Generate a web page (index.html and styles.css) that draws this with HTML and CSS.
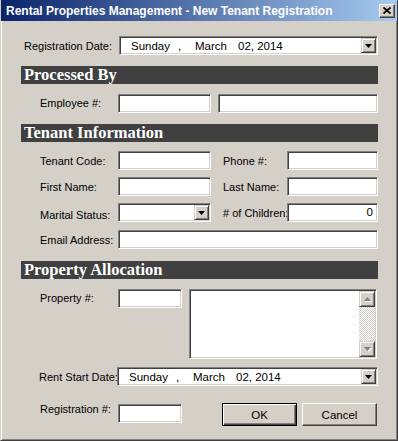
FILE: index.html
```html
<!DOCTYPE html>
<html>
<head>
<meta charset="utf-8">
<title>New Tenant Registration</title>
<link rel="stylesheet" href="styles.css">
</head>
<body>
<div class="window">
  <div class="titlebar">
    <span class="title">Rental Properties Management - New Tenant Registration</span>
    <span class="close-btn"><svg width="8" height="7" viewBox="0 0 8 7"><path d="M0.5 0.5L7.5 6.5M7.5 0.5L0.5 6.5" stroke="#000" stroke-width="1.7"/></svg></span>
  </div>
  <div class="form">
    <div class="row row-regdate">
      <span class="lbl lbl-date">Registration Date:</span>
      <div class="field datefield w-date">
        <span class="d-day">Sunday</span><span class="d-comma">,</span><span class="d-month">March</span><span class="d-rest">02, 2014</span>
        <span class="dropbtn"><svg width="7" height="4" viewBox="0 0 7 4"><path d="M0 0h7L3.5 4z" fill="#000"/></svg></span>
      </div>
    </div>

    <div class="bar bar-1">Processed By</div>

    <div class="row row-emp">
      <span class="lbl lbl-main">Employee #:</span>
      <div class="field w-93"></div>
      <div class="field w-160 gap-7"></div>
    </div>

    <div class="bar bar-2">Tenant Information</div>

    <div class="row row-tcode">
      <span class="lbl lbl-main">Tenant Code:</span>
      <div class="field w-93"></div>
      <span class="lbl lbl-right">Phone #:</span>
      <div class="field w-91"></div>
    </div>

    <div class="row row-next">
      <span class="lbl lbl-main">First Name:</span>
      <div class="field w-93"></div>
      <span class="lbl lbl-right">Last Name:</span>
      <div class="field w-91"></div>
    </div>

    <div class="row row-next">
      <span class="lbl lbl-main lbl-low">Marital Status:</span>
      <div class="field combo w-93">
        <span class="dropbtn"><svg width="7" height="4" viewBox="0 0 7 4"><path d="M0 0h7L3.5 4z" fill="#000"/></svg></span>
      </div>
      <span class="lbl lbl-right">#&nbsp;of Children:</span>
      <div class="field w-91 numfield">0</div>
    </div>

    <div class="row row-email">
      <span class="lbl lbl-main">Email Address:</span>
      <div class="field w-260"></div>
    </div>

    <div class="bar bar-3">Property Allocation</div>

    <div class="row row-prop">
      <span class="lbl lbl-main lbl-prop">Property #:</span>
      <div class="field w-64"></div>
      <div class="field listbox gap-7">
        <div class="scrollbar">
          <span class="sbtn"><svg width="7" height="4" viewBox="0 0 7 4"><path d="M3.5 0L7 4H0z" fill="#808080"/></svg></span>
          <span class="track"></span>
          <span class="sbtn"><svg width="7" height="4" viewBox="0 0 7 4"><path d="M0 0h7L3.5 4z" fill="#808080"/></svg></span>
        </div>
      </div>
    </div>

    <div class="row row-rent">
      <span class="lbl lbl-rent">Rent Start Date:</span>
      <div class="field datefield w-rent">
        <span class="d-day">Sunday</span><span class="d-comma">,</span><span class="d-month">March</span><span class="d-rest">02, 2014</span>
        <span class="dropbtn"><svg width="7" height="4" viewBox="0 0 7 4"><path d="M0 0h7L3.5 4z" fill="#000"/></svg></span>
      </div>
    </div>

    <div class="row row-reg">
      <span class="lbl lbl-main">Registration #:</span>
      <div class="field w-64 reg-input"></div>
      <button class="btn btn-default">OK</button>
      <button class="btn btn-cancel">Cancel</button>
    </div>
  </div>
</div>
</body>
</html>
```

FILE: styles.css
```css
* {
  box-sizing: border-box;
  margin: 0;
  padding: 0;
}

html, body {
  width: 398px;
  height: 441px;
  overflow: hidden;
}

body {
  background: #d4d0c8;
  font-family: "Liberation Sans", Arial, sans-serif;
  font-size: 11px;
  color: #000;
}

.window {
  width: 398px;
  height: 441px;
  border-left: 1px solid #d4d0c8;
  border-right: 1px solid #404040;
  border-bottom: 1px solid #404040;
  box-shadow: inset 1px 0 #ffffff, inset -1px -1px #808080;
  display: flex;
  flex-direction: column;
}

.titlebar {
  height: 21px;
  flex: none;
  background: linear-gradient(90deg, #0a246a 0%, #a6caf0 100%);
  display: flex;
  align-items: center;
  justify-content: space-between;
  padding: 0 2px 0 5px;
}

.title {
  color: #fff;
  font-weight: bold;
  font-size: 12px;
  white-space: nowrap;
}

.close-btn {
  width: 16px;
  height: 14px;
  background: #d4d0c8;
  border-top: 1px solid #fff;
  border-left: 1px solid #fff;
  border-right: 1px solid #404040;
  border-bottom: 1px solid #404040;
  box-shadow: inset -1px -1px #808080;
  display: flex;
  align-items: center;
  justify-content: center;
  padding-bottom: 1px;
}

.form {
  padding-left: 20px;
  display: flex;
  flex-direction: column;
}

.row {
  display: flex;
  align-items: center;
  height: 19px;
}

.row-regdate { margin-top: 15px; }
.row-emp { margin-top: 10px; height: 18px; }
.row-tcode { margin-top: 9px; }
.row-next { margin-top: 7px; }
.row-email { margin-top: 8px; }
.row-prop { margin-top: 10px; height: 70px; align-items: flex-start; }
.row-rent { margin-top: 8px; }
.row-reg { margin-top: 17px; height: 23px; align-items: flex-start; }

.bar {
  width: 357px;
  height: 18px;
  background: #404040;
  color: #fff;
  font-family: "Liberation Serif", "Times New Roman", serif;
  font-weight: bold;
  font-size: 16.5px;
  line-height: 18px;
  padding-left: 3px;
  white-space: nowrap;
}

.bar-1 { margin-top: 11px; }
.bar-2 { margin-top: 12px; }
.bar-3 { margin-top: 12px; }

.lbl {
  white-space: nowrap;
  flex: none;
}

.lbl-date {
  width: 98px;
  padding-left: 3px;
}

.lbl-main {
  width: 97px;
  padding-left: 19px;
}

.lbl-rent {
  width: 96px;
  padding-left: 18px;
}

.lbl-right {
  width: 76px;
  padding-left: 12px;
}

.lbl-low {
  padding-top: 4px;
}

.lbl-prop {
  margin-top: 3px;
}

.field {
  flex: none;
  height: 19px;
  background: #fff;
  border-top: 1px solid #808080;
  border-left: 1px solid #808080;
  border-right: 1px solid #fff;
  border-bottom: 1px solid #fff;
  box-shadow: inset 1px 1px #404040, inset -1px -1px #d4d0c8;
  position: relative;
}

.w-date { width: 259px; }
.w-rent { width: 261px; }
.w-93 { width: 93px; }
.w-160 { width: 160px; }
.w-91 { width: 91px; }
.w-260 { width: 260px; }
.w-64 { width: 64px; }

.gap-7 { margin-left: 7px; }

.datefield {
  display: flex;
  align-items: center;
  padding-left: 11px;
  font-size: 11.5px;
}

.d-day { width: 47px; }
.d-comma { width: 17px; }
.d-month { width: 43px; }

.dropbtn {
  position: absolute;
  right: 1px;
  top: 1px;
  width: 15px;
  height: 15px;
  background: #d4d0c8;
  border-top: 1px solid #d4d0c8;
  border-left: 1px solid #d4d0c8;
  border-right: 1px solid #404040;
  border-bottom: 1px solid #404040;
  box-shadow: inset 1px 1px #fff, inset -1px -1px #808080;
  display: flex;
  align-items: center;
  justify-content: center;
}

.numfield {
  text-align: right;
  padding-right: 4px;
  line-height: 16px;
  font-size: 11.5px;
}

.listbox {
  width: 188px;
  height: 70px;
}

.scrollbar {
  position: absolute;
  right: 1px;
  top: 1px;
  bottom: 1px;
  width: 16px;
  display: flex;
  flex-direction: column;
}

.sbtn {
  width: 16px;
  height: 16px;
  flex: none;
  background: #d4d0c8;
  border-top: 1px solid #d4d0c8;
  border-left: 1px solid #d4d0c8;
  border-right: 1px solid #404040;
  border-bottom: 1px solid #404040;
  box-shadow: inset 1px 1px #fff, inset -1px -1px #808080;
  display: flex;
  align-items: center;
  justify-content: center;
}

.sbtn svg {
  filter: drop-shadow(1px 1px 0 #fff);
}

.track {
  flex: 1;
  background: repeating-conic-gradient(#ffffff 0 25%, #d4d0c8 0 50%) 0 0 / 2px 2px;
}

.reg-input {
  margin-top: 1px;
}

.btn {
  flex: none;
  width: 75px;
  height: 23px;
  font-family: "Liberation Sans", Arial, sans-serif;
  font-size: 11.5px;
  color: #000;
  background: #d4d0c8;
  cursor: default;
}

.btn-default {
  margin-left: 40px;
  border: 1px solid #000;
  box-shadow: inset 1px 1px #fff, inset -1px -1px #404040, inset -2px -2px #808080;
}

.btn-cancel {
  margin-left: 5px;
  border-top: 1px solid #fff;
  border-left: 1px solid #fff;
  border-right: 1px solid #404040;
  border-bottom: 1px solid #404040;
  box-shadow: inset -1px -1px #808080;
}
```
